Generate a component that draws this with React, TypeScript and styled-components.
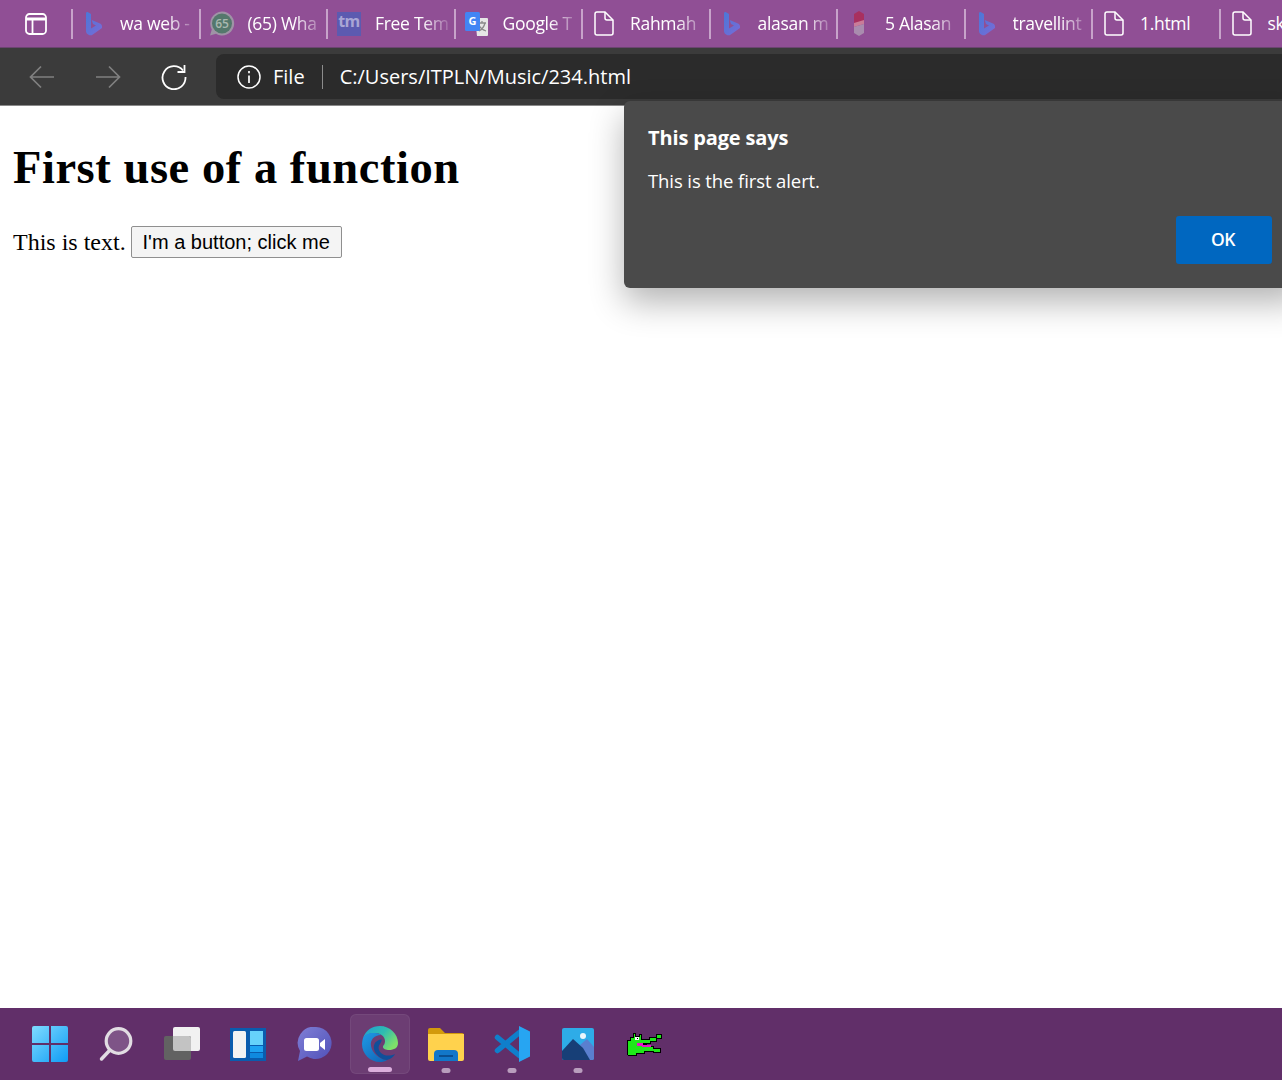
import React from 'react'
import styled, {createGlobalStyle} from 'styled-components'

const uiFont = '"Open Sans", "Noto Sans", sans-serif'

const GlobalStyle = createGlobalStyle`
  html, body {
    margin: 0;
    padding: 0;
    background: #fff;
  }
`

const Screen = styled.div`
  position: relative;
  width: 1282px;
  height: 1080px;
  overflow: hidden;
  display: flex;
  flex-direction: column;
`

/* tab strip */
const TabStrip = styled.div`
  flex: none;
  height: 48px;
  background: #904f95;
  display: flex;
  align-items: center;
  overflow: hidden;
  box-sizing: border-box;
  border-bottom: 1px solid #6b4470;
`

const TabActions = styled.div`
  flex: none;
  width: 71px;
  height: 32px;
  display: flex;
  align-items: center;
  padding-left: 25px;
  box-sizing: border-box;
`

const Tab = styled.div`
  flex: none;
  width: 127.5px;
  height: 30px;
  box-sizing: border-box;
  border-left: 2px solid #c7a3ca;
  display: flex;
  align-items: center;
  padding-left: 9px;
`

const TabIconSlot = styled.div`
  flex: none;
  width: 24px;
  height: 24px;
  display: flex;
  align-items: center;
  justify-content: center;

  svg {
    flex: none;
  }
`

const TabTitle = styled.span<{$fade: boolean}>`
  margin: -2px 0 0 14px;
  width: 74px;
  overflow: hidden;
  white-space: nowrap;
  font: 17.5px/24px ${uiFont};
  letter-spacing: -0.3px;
  color: #fff;
  ${p => p.$fade ? 'mask-image: linear-gradient(to right, #000 62%, rgba(0,0,0,0.15) 100%);' : ''}
`

/* toolbar */
const Toolbar = styled.div`
  flex: none;
  height: 58px;
  background: #3b3b3b;
  display: flex;
  align-items: center;
  border-bottom: 1px solid #8a8a8a;
  box-sizing: border-box;
`

const NavGroup = styled.div`
  flex: none;
  width: 216px;
  padding-left: 9px;
  box-sizing: border-box;
  display: flex;
  align-items: center;
`

const NavButton = styled.div`
  width: 66px;
  height: 40px;
  display: flex;
  align-items: center;
  justify-content: center;
`

const AddressBar = styled.div`
  flex: 1;
  height: 45px;
  background: #2b2b2b;
  border-radius: 8px 0 0 8px;
  display: flex;
  align-items: center;
  padding-left: 21px;
  color: #fff;
  font: 20px/28px ${uiFont};
`

const SiteLabel = styled.span`
  margin-left: 12px;
  padding-right: 17px;
  border-right: 1px solid #8c8c8c;
  line-height: 24px;
`

const Url = styled.span`
  margin-left: 17px;
`

/* page */
const PageBody = styled.main`
  flex: 1;
  padding: 10px 13px;
  color: #000;
`

const Heading = styled.h1`
  margin: 25px 0 31px;
  font: bold 46.5px/54px "Liberation Serif", serif;
  letter-spacing: 0.55px;
`

const TextRow = styled.p`
  margin: 0;
  display: flex;
  align-items: center;
  gap: 5px;
  font: 24px/32px "Liberation Serif", serif;
`

const PageButton = styled.button`
  height: 32px;
  width: 211px;
  padding: 0;
  box-sizing: border-box;
  background: #f4f4f4;
  border: 1px solid #8f8f8f;
  border-radius: 2px;
  font: 20px/1 "Liberation Sans", sans-serif;
  color: #000;
`

/* alert */
const Dialog = styled.div`
  position: absolute;
  top: 101px;
  left: 624px;
  width: 680px;
  height: 187px;
  box-sizing: border-box;
  background: #4a4a4a;
  border-radius: 6px;
  padding: 22px 24px;
  color: #fff;
  font-family: ${uiFont};
  box-shadow: 0 14px 34px rgba(0, 0, 0, 0.3);
`

const DialogTitle = styled.div`
  font-size: 20px;
  line-height: 30px;
  font-weight: 700;
  letter-spacing: -0.15px;
`

const DialogText = styled.div`
  margin-top: 14px;
  font-size: 18.5px;
  line-height: 28px;
  letter-spacing: -0.1px;
`

const OkButton = styled.button`
  position: absolute;
  left: 552px;
  top: 115px;
  width: 96px;
  height: 48px;
  padding: 0 2px 2px 0;
  border: none;
  border-radius: 3px;
  background: #0067c0;
  color: #fff;
  font: 600 17.5px ${uiFont};
  letter-spacing: -0.5px;
`

/* taskbar */
const Taskbar = styled.footer`
  flex: none;
  height: 72px;
  background: #612f69;
  display: flex;
  align-items: center;
  padding-left: 20px;
`

const TaskItem = styled.div<{$active?: boolean}>`
  position: relative;
  flex: none;
  width: 60px;
  height: 60px;
  margin-right: 6px;
  border-radius: 6px;
  display: flex;
  align-items: center;
  justify-content: center;
  box-sizing: border-box;
  ${p => p.$active ? 'background: rgba(255,255,255,0.07); border: 1px solid rgba(255,255,255,0.06);' : ''}
`

const RunningDot = styled.span<{$active?: boolean}>`
  position: absolute;
  bottom: 1px;
  left: 50%;
  transform: translateX(-50%);
  height: 5px;
  width: ${p => p.$active ? '24px' : '9px'};
  border-radius: 3px;
  background: ${p => p.$active ? '#dcaedd' : '#b99dbd'};
`

/* icons */
const BingIcon = () => (
  <svg width="16" height="24" viewBox="0 0 16 24">
    <defs>
      <linearGradient id="bingGrad" x1="0" y1="0" x2="1" y2="1">
        <stop offset="0" stopColor="#4a78d8" />
        <stop offset="1" stopColor="#7b6ad6" />
      </linearGradient>
    </defs>
    <path d="M0 1.500C0 .500 1 -.300 2 .300L5 2v14.500l5-3-3-1.500-1.300-4L14 11.500c1.300.7 2 1.700 2 3v1.500L6.500 22.800C4 24.500 0 22 0 19z" fill="url(#bingGrad)" />
  </svg>
)

const PageIcon = () => (
  <svg width="20" height="25" viewBox="0 0 20 25" fill="none" stroke="#fff" strokeWidth="1.500">
    <path d="M3 1h8l8 8v13a2 2 0 0 1-2 2H3a2 2 0 0 1-2-2V3a2 2 0 0 1 2-2z" />
    <path d="M11 1v6a2 2 0 0 0 2 2h6" />
  </svg>
)

const WhatsappIcon = () => (
  <svg width="26" height="25" viewBox="0 0 26 25">
    <path d="M13 .500a12 12 0 1 1-6 22.300L1 24.500l1.800-6A12 12 0 0 1 13 .500z" fill="#9f93a6" />
    <circle cx="13" cy="12.500" r="10" fill="#54786c" />
    <text x="13" y="17" textAnchor="middle" fontFamily="Open Sans, sans-serif" fontSize="12" fontWeight="600" fill="#a9b9b0">65</text>
  </svg>
)

const TmIcon = () => (
  <svg width="24" height="24" viewBox="0 0 24 24">
    <rect width="24" height="24" fill="#5c5ab0" />
    <text x="12" y="15" textAnchor="middle" fontFamily="Open Sans, sans-serif" fontSize="16" fontWeight="700" letterSpacing="-0.500" fill="#a9a5d5">tm</text>
  </svg>
)

const TranslateIcon = () => (
  <svg width="24" height="24" viewBox="0 0 24 24">
    <path d="M10 6h12a1 1 0 0 1 1 1v16a1 1 0 0 1-1 1H12z" fill="#e6e6e6" />
    <path d="M13 11h8M17 9v2M20 11c-1 4-4 7-6 8M14 13c1 3 4 5 7 6" stroke="#8a8a8a" strokeWidth="1.300" fill="none" />
    <rect x="0" y="0" width="15" height="19" rx="1.500" fill="#4285f4" />
    <text x="7.500" y="13" textAnchor="middle" fontFamily="Open Sans, sans-serif" fontSize="11" fontWeight="700" fill="#fff">G</text>
  </svg>
)

const PinIcon = () => (
  <svg width="12" height="25" viewBox="0 0 12 25">
    <path d="M6 0l5 3v9H1V3z" fill="#a8305f" />
    <path d="M1 12l10-3v4L1 16z" fill="#c97c98" />
    <path d="M1 16l10-3v9l-5 3-5-3z" fill="#a98cae" />
  </svg>
)

const tabs = [
  {title: 'wa web -', icon: <BingIcon />},
  {title: '(65) Wha', icon: <WhatsappIcon />},
  {title: 'Free Tem', icon: <TmIcon />},
  {title: 'Google T', icon: <TranslateIcon />},
  {title: 'Rahmah', icon: <PageIcon />},
  {title: 'alasan m', icon: <BingIcon />},
  {title: '5 Alasan', icon: <PinIcon />},
  {title: 'travellint', icon: <BingIcon />},
  {title: '1.html', icon: <PageIcon />, short: true},
  {title: 'sk', icon: <PageIcon />, short: true},
]

const StartIcon = () => (
  <svg width="36" height="36" viewBox="0 0 36 36">
    <defs>
      <linearGradient id="winGrad" x1="0" y1="0" x2="1" y2="1">
        <stop offset="0" stopColor="#7fdcff" />
        <stop offset="1" stopColor="#0f9bf5" />
      </linearGradient>
    </defs>
    <path d="M2 0h15v17H0V2a2 2 0 0 1 2-2zM19 0h15a2 2 0 0 1 2 2v15H19zM0 19h17v17H2a2 2 0 0 1-2-2zM19 19h17v15a2 2 0 0 1-2 2H19z" fill="url(#winGrad)" />
  </svg>
)

const SearchIcon = () => (
  <svg width="34" height="36" viewBox="0 0 34 36">
    <circle cx="19.500" cy="15" r="12.300" fill="#7e5487" stroke="#e2dde3" strokeWidth="3.200" />
    <path d="M10.500 24.500L2.500 33" stroke="#e2dde3" strokeWidth="3.500" strokeLinecap="round" />
  </svg>
)

const TaskViewIcon = () => (
  <svg width="36" height="34" viewBox="0 0 36 34">
    <rect x="9" y="0" width="27" height="24" rx="2" fill="#f1f1f1" />
    <rect x="0" y="9" width="27" height="24" rx="2" fill="#626262" />
    <path d="M9 9h16a2 2 0 0 1 2 2v13H11a2 2 0 0 1-2-2z" fill="#c3c3c3" />
  </svg>
)

const WidgetsIcon = () => (
  <svg width="36" height="33" viewBox="0 0 36 33">
    <rect width="36" height="33" fill="#0a5cae" />
    <rect x="3" y="3" width="13" height="27" rx="1.500" fill="#f3f3f3" />
    <rect x="20" y="3" width="13" height="14" fill="#66d2fb" />
    <rect x="20" y="18" width="13" height="6" fill="#1ea3f2" />
    <rect x="20" y="25" width="13" height="5" fill="#0f8ae0" />
  </svg>
)

const ChatIcon = () => (
  <svg width="36" height="35" viewBox="0 0 36 35">
    <defs>
      <linearGradient id="chatGrad" x1="0" y1="0" x2="1" y2="1">
        <stop offset="0" stopColor="#7f7fd6" />
        <stop offset="1" stopColor="#5050b8" />
      </linearGradient>
    </defs>
    <path d="M20 0a16 16 0 1 1-9 29.500L2 34l2-10A16 16 0 0 1 20 0z" fill="url(#chatGrad)" />
    <rect x="8" y="11" width="15" height="13" rx="2.500" fill="#fff" />
    <path d="M24 16l5-4v11l-5-4z" fill="#fff" />
  </svg>
)

const EdgeIcon = () => (
  <svg width="36" height="36" viewBox="0 0 36 36">
    <defs>
      <linearGradient id="edgeTop" x1="0" y1="0" x2="1" y2="0.600">
        <stop offset="0" stopColor="#1c9fd8" />
        <stop offset="0.55" stopColor="#2fbcb0" />
        <stop offset="1" stopColor="#7ee06a" />
      </linearGradient>
      <linearGradient id="edgeBase" x1="0" y1="0" x2="0.800" y2="1">
        <stop offset="0" stopColor="#1f9ae6" />
        <stop offset="1" stopColor="#1268b8" />
      </linearGradient>
    </defs>
    <path d="M1 12C4 4 10 0 18 0c10 0 18 8 18 17 0 5-4 7-9 7-3 0-6-1-6-3 0-2 2-2 2-6 0-5-5-8-10-8C8 7 3 9 1 12z" fill="url(#edgeTop)" />
    <path d="M1 12c2-4 7-5.500 12-5 3 .3 5 1 6 2-7 0-11 5-10 11 1 7 8 13 16 14-2 1.500-4.500 2-7 2C8 36 0 28 0 18c0-2 .5-4 1-6z" fill="url(#edgeBase)" />
    <path d="M19.500 13.500C14 14 11 18 12 23c1 6 8 11 13 11 4-1 7-3.500 8-6-5 2.500-11 2-14-1-3-3-3-7-1-9 1-2 2-3 1.500-4.500z" fill="#0f4f9a" />
  </svg>
)

const FolderIcon = () => (
  <svg width="36" height="33" viewBox="0 0 36 33">
    <path d="M2 0h10l5 5h17a2 2 0 0 1 2 2v3H0V2a2 2 0 0 1 2-2z" fill="#d39a0c" />
    <path d="M0 6h36v25a2 2 0 0 1-2 2H2a2 2 0 0 1-2-2z" fill="#ffd24d" />
    <path d="M6 33V26a4 4 0 0 1 4-4h16a4 4 0 0 1 4 4v7z" fill="#1277c9" />
    <rect x="11" y="27" width="14" height="2" fill="#0a4f91" />
  </svg>
)

const VsCodeIcon = () => (
  <svg width="36" height="36" viewBox="0 0 36 36">
    <path d="M3.500 11.500L26 30M3.500 24.500L26 6" stroke="#0f7fcb" strokeWidth="5.500" strokeLinecap="round" fill="none" />
    <path d="M25 0l11 5.500v25L25 36z" fill="#27a5f2" />
  </svg>
)

const PhotosIcon = () => (
  <svg width="32" height="32" viewBox="0 0 32 32">
    <rect width="32" height="32" rx="2" fill="#2eace8" />
    <circle cx="21" cy="8" r="3" fill="#eaf6fc" />
    <path d="M18 17l7-6 7 8v11a2 2 0 0 1-2 2h-5z" fill="#5a7fcf" />
    <path d="M0 23l11-12 10 9 7 12H2a2 2 0 0 1-2-2z" fill="#173f77" />
  </svg>
)

const CrocIcon = () => (
  <svg width="36" height="25" viewBox="0 0 36 25" shapeRendering="crispEdges">
    <path
      d="M1 8H4V5H7V1H9V4H13V2H15V7H23V5H30V2H35V6H30V9H24V11H15V12H20V14H27V16H34V20H27V19H18V21H10V23H2Z"
      fill="#1fe81a"
      stroke="#000"
      strokeWidth="1"
    />
    <path d="M11 11H17V13H25V15H16V14H11Z" fill="#e812c9" />
    <rect x="9" y="5" width="4" height="3" fill="#fff" />
    <rect x="11" y="6" width="1" height="1" fill="#000" />
  </svg>
)

const tasks = [
  {icon: <StartIcon />, key: 'start'},
  {icon: <SearchIcon />, key: 'search'},
  {icon: <TaskViewIcon />, key: 'view'},
  {icon: <WidgetsIcon />, key: 'widgets'},
  {icon: <ChatIcon />, key: 'chat'},
  {icon: <EdgeIcon />, key: 'edge', active: true, running: true},
  {icon: <FolderIcon />, key: 'files', running: true},
  {icon: <VsCodeIcon />, key: 'code', running: true},
  {icon: <PhotosIcon />, key: 'photos', running: true},
  {icon: <CrocIcon />, key: 'croc'},
]

export default function App() {
  return (
    <Screen>
      <GlobalStyle />
      <TabStrip>
        <TabActions>
          <svg width="22" height="22" viewBox="0 0 22 22" fill="none" stroke="#fff" strokeWidth="1.800">
            <rect x="1" y="1" width="20" height="20" rx="3.500" />
            <path d="M1 6h20" strokeWidth="3" />
            <path d="M7.500 7v14" />
          </svg>
        </TabActions>
        {tabs.map(tab => (
          <Tab key={tab.title}>
            <TabIconSlot>{tab.icon}</TabIconSlot>
            <TabTitle $fade={!tab.short}>{tab.title}</TabTitle>
          </Tab>
        ))}
      </TabStrip>
      <Toolbar>
        <NavGroup>
          <NavButton>
            <svg width="26" height="24" viewBox="0 0 26 24" fill="none" stroke="#808080" strokeWidth="1.700">
              <path d="M25 12H1.500M12 1.500L1.500 12 12 22.500" />
            </svg>
          </NavButton>
          <NavButton>
            <svg width="26" height="24" viewBox="0 0 26 24" fill="none" stroke="#808080" strokeWidth="1.700">
              <path d="M1 12h23.500M14 1.500L24.500 12 14 22.500" />
            </svg>
          </NavButton>
          <NavButton>
            <svg width="26" height="26" viewBox="0 0 26 26" fill="none" stroke="#fff" strokeWidth="1.800">
              <path d="M22 6.500A11.500 11.500 0 1 0 24.500 13" />
              <path d="M23.500 1v7h-7" />
            </svg>
          </NavButton>
        </NavGroup>
        <AddressBar>
          <svg width="24" height="24" viewBox="0 0 24 24" fill="none" stroke="#fff" strokeWidth="1.500">
            <circle cx="12" cy="12" r="11" />
            <path d="M12 10.500V18M12 6v2.200" strokeWidth="1.700" />
          </svg>
          <SiteLabel>File</SiteLabel>
          <Url>C:/Users/ITPLN/Music/234.html</Url>
        </AddressBar>
      </Toolbar>
      <PageBody>
        <Heading>First use of a function</Heading>
        <TextRow>
          This is text.
          <PageButton>I'm a button; click me</PageButton>
        </TextRow>
      </PageBody>
      <Taskbar>
        {tasks.map(task => (
          <TaskItem key={task.key} $active={task.active}>
            {task.icon}
            {task.running && <RunningDot $active={task.active} />}
          </TaskItem>
        ))}
      </Taskbar>
      <Dialog>
        <DialogTitle>This page says</DialogTitle>
        <DialogText>This is the first alert.</DialogText>
        <OkButton>OK</OkButton>
      </Dialog>
    </Screen>
  )
}
